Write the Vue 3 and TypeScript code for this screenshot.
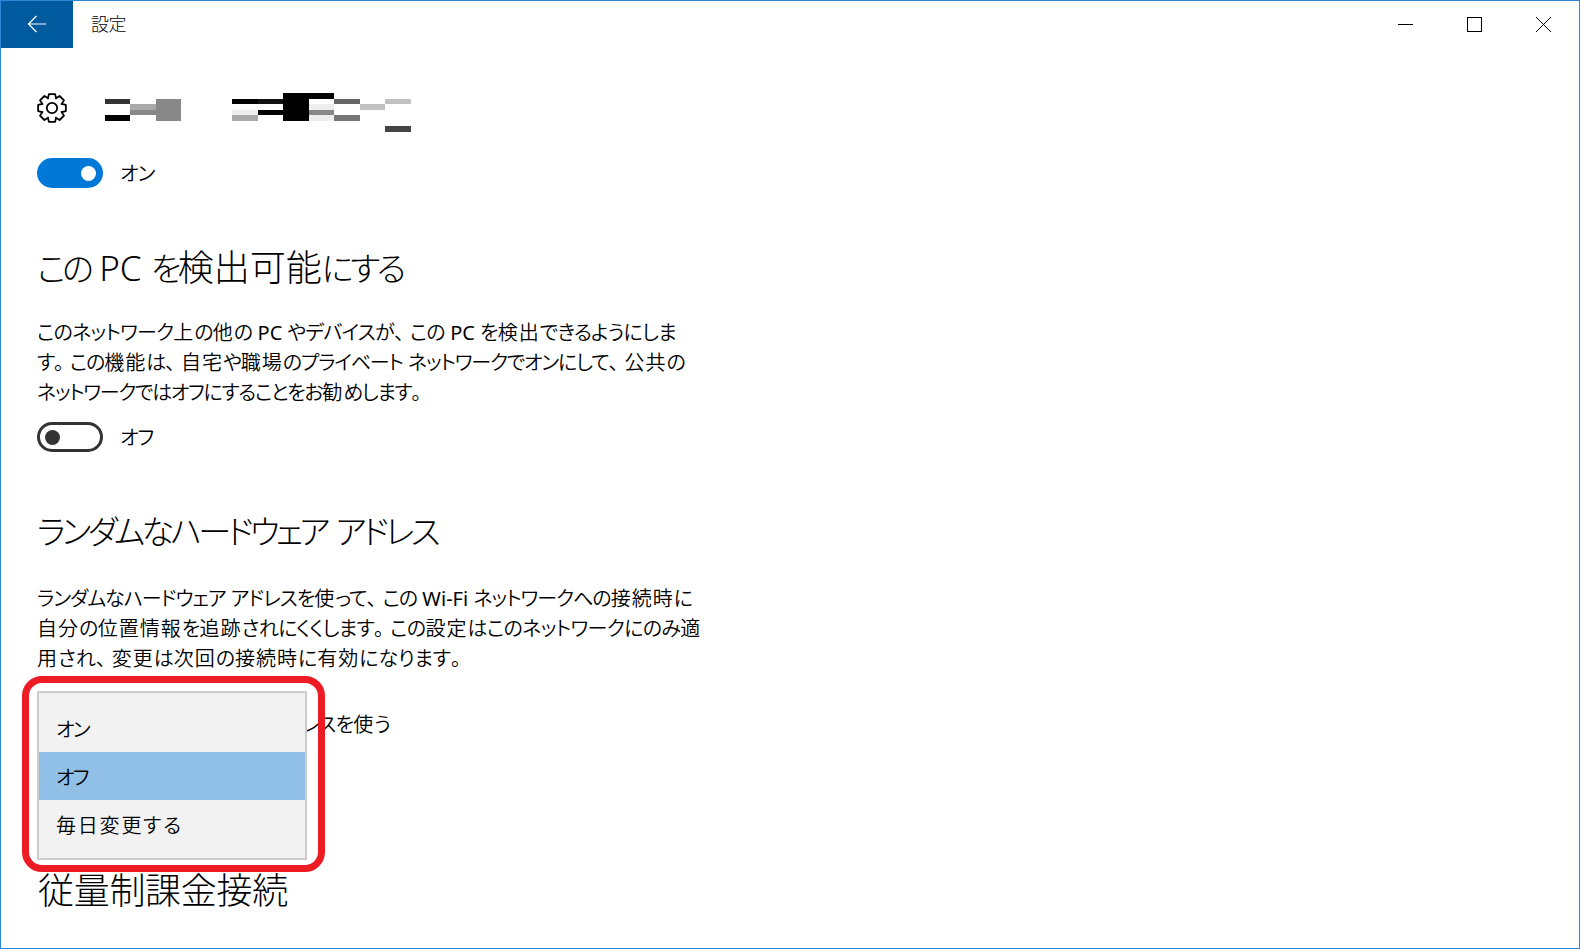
<script setup lang="ts">
type Cell = [number, number, number, string]
interface Seg { t: string; c: string }
interface Line { segs: Seg[]; kana: number }

const mosaic: Cell[] = [
  [0, 1, 1, '#333'], [0, 4, 1, '#000'],
  [1, 2, 1, '#aaa'], [1, 3, 1, '#888'],
  [2, 1, 4, '#888'],
  [5, 1, 1, '#000'], [5, 3, 1, '#eee'], [5, 4, 1, '#aaa'],
  [6, 1, 1, '#111'], [6, 3, 1, '#000'],
  [7, 0, 5, '#000'],
  [8, 0, 1, '#000'], [8, 2, 1, '#eee'], [8, 3, 1, '#888'], [8, 4, 1, '#eee'],
  [9, 1, 1, '#666'], [9, 4, 1, '#777'],
  [10, 2, 1, '#c2c2c2'],
  [11, 1, 1, '#c2c2c2'], [11, 6, 1, '#444'],
]
function cellStyle(c: Cell) {
  return {
    gridColumn: `${c[0] + 1}`,
    gridRow: `${c[1] + 1} / span ${c[2]}`,
    background: c[3],
  }
}
function gearPath(): string {
  const cx = 15, cy = 15
  const rOut = 14.2, rIn = 10.4
  const pts: string[] = []
  for (let i = 0; i < 8; i++) {
    const a = (i * Math.PI) / 4 - Math.PI / 2
    const step = [[-0.4, rIn], [-0.22, rOut], [0.22, rOut], [0.4, rIn]]
    for (const [d, r] of step) {
      const x = cx + r * Math.cos(a + d)
      const y = cy + r * Math.sin(a + d)
      pts.push(`${x.toFixed(2)} ${y.toFixed(2)}`)
    }
  }
  return 'M' + pts.join('L') + 'Z'
}
const gear = gearPath()

function split(s: string): Seg[] {
  const out: Seg[] = []
  const re = /[\u3040-\u30ff]+|[、。]|[\u4e00-\u9fff]+|[^\u3040-\u30ff、。\u4e00-\u9fff]+/g
  for (const m of s.match(re) ?? []) {
    const ch = m.charCodeAt(0)
    let c = 'latin'
    if (ch >= 0x3040 && ch <= 0x30ff) c = 'kana'
    else if (m === '、' || m === '。') c = 'punct'
    else if (ch >= 0x4e00 && ch <= 0x9fff) c = 'kanji'
    out.push({ t: m, c })
  }
  return out
}
const para1: Line[] = [
  { segs: split('このネットワーク上の他の PC やデバイスが、この PC を検出できるようにしま'), kana: -0.76 },
  { segs: split('す。この機能は、自宅や職場のプライベート ネットワークでオンにして、公共の'), kana: -1.15 },
  { segs: split('ネットワークではオフにすることをお勧めします。'), kana: -1.3 },
]
const para2: Line[] = [
  { segs: split('ランダムなハードウェア アドレスを使って、この Wi-Fi ネットワークへの接続時に'), kana: -1.0 },
  { segs: split('自分の位置情報を追跡されにくくします。この設定はこのネットワークにのみ適'), kana: -0.63 },
  { segs: split('用され、変更は次回の接続時に有効になります。'), kana: -0.05 },
]
function lineStyle(l: Line) {
  return { '--kana': `${l.kana}px` }
}
const head1 = split('この PC を検出可能にする')
const head2 = split('ランダムなハードウェア アドレス')
const behind = split('ランダムなハードウェア アドレスを使う')
const onLabel = split('オン')
const offLabel = split('オフ')
const options = ['オン', 'オフ', '毎日変更する']
</script>

<template>
  <div class="window">
    <header class="titlebar">
      <button class="back" aria-label="戻る">
        <svg width="20" height="18" viewBox="0 0 20 18" fill="none" stroke="#fff" stroke-width="1.2">
          <path d="M19 9H1.5M9.5 1L1.5 9l8 8" />
        </svg>
      </button>
      <span class="app-title">設定</span>
      <div class="controls">
        <span class="ctl">
          <svg width="15" height="15" viewBox="0 0 15 15"><rect x="0" y="7" width="15" height="1" fill="#000" /></svg>
        </span>
        <span class="ctl">
          <svg width="15" height="15" viewBox="0 0 15 15" fill="none" stroke="#000"><rect x="0.5" y="0.5" width="14" height="14" /></svg>
        </span>
        <span class="ctl">
          <svg width="15" height="15" viewBox="0 0 15 15" fill="none" stroke="#000"><path d="M0 0l15 15M15 0L0 15" /></svg>
        </span>
      </div>
    </header>

    <main class="content">
      <div class="page-head">
        <svg class="gear" width="30" height="30" viewBox="0 0 30 30" fill="none" stroke="#000" stroke-width="1.8" stroke-linejoin="round">
          <path :d="gear" />
          <circle cx="15" cy="15" r="5.2" />
        </svg>
        <div class="mosaic">
          <i v-for="(c, i) in mosaic" :key="i" :style="cellStyle(c)"></i>
        </div>
      </div>

      <div class="toggle-row first">
        <span class="switch on"><b></b></span>
        <span class="label"><span v-for="(s, i) in onLabel" :key="i" :class="s.c">{{ s.t }}</span></span>
      </div>

      <h2 class="h1"><span v-for="(s, i) in head1" :key="i" :class="s.c">{{ s.t }}</span></h2>
      <p class="para p1">
        <span v-for="(l, n) in para1" :key="n" class="line" :style="lineStyle(l)"><span v-for="(s, i) in l.segs" :key="i" :class="s.c">{{ s.t }}</span></span>
      </p>
      <div class="toggle-row">
        <span class="switch off"><b></b></span>
        <span class="label"><span v-for="(s, i) in offLabel" :key="i" :class="s.c">{{ s.t }}</span></span>
      </div>

      <h2 class="h2"><span v-for="(s, i) in head2" :key="i" :class="s.c">{{ s.t }}</span></h2>
      <p class="para p2">
        <span v-for="(l, n) in para2" :key="n" class="line" :style="lineStyle(l)"><span v-for="(s, i) in l.segs" :key="i" :class="s.c">{{ s.t }}</span></span>
      </p>
      <div class="behind"><span v-for="(s, i) in behind" :key="i" :class="s.c">{{ s.t }}</span></div>

      <h2 class="h3">従量制課金接続</h2>
    </main>

    <ul class="menu">
      <li v-for="o in options" :key="o" :class="{ sel: o === 'オフ' }">{{ o }}</li>
    </ul>
    <div class="annot"></div>
  </div>
</template>

<style scoped>
.window {
  width: 1580px;
  height: 949px;
  box-sizing: border-box;
  border: 1px solid #2b88d8;
  background: #fff;
  position: relative;
  overflow: hidden;
  color: #000;
  font-family: "Noto Sans", "Noto Sans CJK JP", sans-serif;
  font-weight: 300;
  font-feature-settings: "palt";
}
.titlebar {
  display: flex;
  align-items: center;
  height: 47px;
}
.back {
  width: 72px;
  height: 47px;
  border: 0;
  padding: 0 0 2px;
  background: #005a9e;
  display: flex;
  align-items: center;
  justify-content: center;
}
.app-title {
  margin-left: 18px;
  padding-bottom: 4px;
  font-size: 18px;
  letter-spacing: -0.6px;
}
.controls {
  margin-left: auto;
  padding-right: 1px;
  display: flex;
}
.ctl {
  width: 69px;
  height: 47px;
  display: flex;
  align-items: center;
  justify-content: center;
}
.content {
  padding-left: 36px;
}
.page-head {
  display: flex;
  margin-top: 45px;
  height: 39px;
}
.gear {
  margin-right: 37.5px;
}
.mosaic {
  display: grid;
  grid-template-columns: repeat(12, 25.5px);
  grid-template-rows: repeat(7, 5.57px);
}
.toggle-row {
  display: flex;
  align-items: center;
  height: 30px;
  gap: 17px;
  font-size: 20px;
  font-weight: 350;
  margin-top: 14px;
}
.toggle-row.first {
  margin-top: 26px;
}
.label {
  padding-bottom: 2px;
}
.switch {
  width: 66px;
  height: 30px;
  box-sizing: border-box;
  border-radius: 15px;
  display: flex;
  align-items: center;
}
.switch b {
  width: 15px;
  height: 15px;
  border-radius: 50%;
}
.switch.on {
  background: #0078d7;
  justify-content: flex-end;
  padding-right: 7px;
}
.switch.on b {
  background: #fff;
}
.switch.off {
  border: 3px solid #333;
  padding-left: 5px;
}
.switch.off b {
  background: #333;
}
h2 {
  margin: 0;
  font-weight: 300;
  font-size: 36px;
  line-height: 48px;
  white-space: nowrap;
}
h2 .kana {
  font-size: 0.92em;
  letter-spacing: -3.7px;
}
h2 .latin {
  font-size: 35px;
}
.h1 {
  margin-top: 56px;
}
.h2 {
  margin-top: 55px;
}
.h3 {
  margin-top: 127px;
  margin-left: 1px;
  letter-spacing: -0.3px;
}
.para {
  margin: 25px 0 0;
  font-size: 20px;
  line-height: 30px;
  font-weight: 350;
}
.para .latin {
  font-weight: 400;
}
.para.p2 {
  margin-top: 28px;
}
.line {
  display: block;
  white-space: nowrap;
}
.para .kana {
  letter-spacing: var(--kana);
}
.label .kana,
.behind .kana {
  letter-spacing: -0.8px;
}
.para .kanji,
.behind .kanji {
  letter-spacing: 1px;
}
.para .punct {
  font-feature-settings: normal;
  letter-spacing: -4px;
}
.behind {
  width: 353px;
  text-align: right;
  white-space: nowrap;
  font-size: 20px;
  line-height: 30px;
  font-weight: 350;
  margin-top: 36px;
}
.menu {
  position: absolute;
  left: 36px;
  top: 690px;
  width: 270px;
  height: 169px;
  box-sizing: border-box;
  margin: 0;
  padding: 11px 0;
  list-style: none;
  background: #f2f2f2;
  border: 2px solid #ccc;
  font-size: 20px;
  font-weight: 350;
}
.menu li {
  height: 48px;
  line-height: 51px;
  padding-left: 17px;
  letter-spacing: -1.6px;
}
.menu li:nth-child(3) {
  letter-spacing: 1.8px;
}
.menu li.sel {
  background: #91c0e7;
}
.annot {
  position: absolute;
  left: 21px;
  top: 675px;
  width: 303px;
  height: 196px;
  box-sizing: border-box;
  border: 7px solid #ed1c24;
  border-radius: 20px;
}
</style>

<style>
html, body {
  margin: 0;
  overflow: hidden;
}
</style>
